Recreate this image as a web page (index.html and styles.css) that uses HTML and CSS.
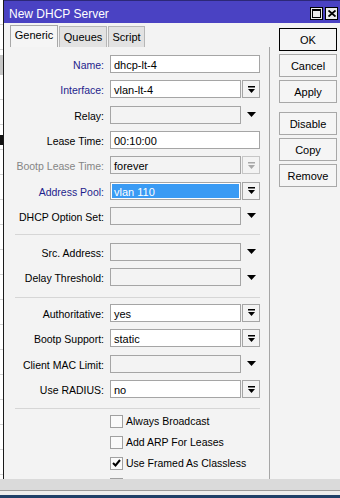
FILE: index.html
```html
<!DOCTYPE html>
<html lang="en">
<head>
    <meta charset="UTF-8">
    <meta name="viewport" content="width=device-width, initial-scale=1.0">
    <title>New DHCP Server</title>
    <link rel="stylesheet" href="styles.css">
</head>
<body>
<div class="screen">
    <div class="desk">
        <div class="behind"></div>
        <div class="window">
            <div class="titlebar">
                <span class="title-text">New DHCP Server</span>
                <span class="tbtn">
                    <svg width="9" height="9" viewBox="0 0 9 9"><rect x="0.5" y="0.5" width="8" height="8" fill="none" stroke="#000"/><rect width="9" height="2"/></svg>
                </span>
                <span class="tbtn">
                    <svg width="8" height="7" viewBox="0 0 8 7"><path d="M0.5 0.5l7 6M7.5 0.5l-7 6" stroke="#000" stroke-width="1.8"/></svg>
                </span>
            </div>
            <div class="winbody">
                <div class="main">
                    <div class="tabs">
                        <div class="tab active">Generic</div>
                        <div class="tab w-queues">Queues</div>
                        <div class="tab w-script">Script</div>
                    </div>
                    <div class="panel">
                        <div class="group">
                            <div class="row">
                                <span class="label blue">Name:</span>
                                <span class="field">dhcp-lt-4</span>
                            </div>
                            <div class="row">
                                <span class="label blue">Interface:</span>
                                <span class="field short">vlan-lt-4</span>
                                <span class="drop"><svg width="7" height="7" viewBox="0 0 7 7"><rect width="7" height="1.5"/><path d="M0 3h7L3.5 7z"/></svg></span>
                            </div>
                            <div class="row">
                                <span class="label">Relay:</span>
                                <span class="field short empty"></span>
                                <span class="arrow"><svg width="9" height="5" viewBox="0 0 9 5"><path d="M0 0h9L4.5 5z"/></svg></span>
                            </div>
                            <div class="row">
                                <span class="label">Lease Time:</span>
                                <span class="field">00:10:00</span>
                            </div>
                            <div class="row">
                                <span class="label grey">Bootp Lease Time:</span>
                                <span class="field short empty">forever</span>
                                <span class="drop off"><svg width="7" height="7" viewBox="0 0 7 7"><rect width="7" height="1.5"/><path d="M0 3h7L3.5 7z"/></svg></span>
                            </div>
                            <div class="row">
                                <span class="label blue">Address Pool:</span>
                                <span class="field short selected">vlan 110</span>
                                <span class="drop"><svg width="7" height="7" viewBox="0 0 7 7"><rect width="7" height="1.5"/><path d="M0 3h7L3.5 7z"/></svg></span>
                            </div>
                            <div class="row">
                                <span class="label">DHCP Option Set:</span>
                                <span class="field short empty"></span>
                                <span class="arrow"><svg width="9" height="5" viewBox="0 0 9 5"><path d="M0 0h9L4.5 5z"/></svg></span>
                            </div>
                        </div>
                        <div class="sep sep-1"></div>
                        <div class="group">
                            <div class="row">
                                <span class="label">Src. Address:</span>
                                <span class="field short empty"></span>
                                <span class="arrow"><svg width="9" height="5" viewBox="0 0 9 5"><path d="M0 0h9L4.5 5z"/></svg></span>
                            </div>
                            <div class="row">
                                <span class="label">Delay Threshold:</span>
                                <span class="field short empty"></span>
                                <span class="arrow"><svg width="9" height="5" viewBox="0 0 9 5"><path d="M0 0h9L4.5 5z"/></svg></span>
                            </div>
                        </div>
                        <div class="sep sep-2"></div>
                        <div class="group wide">
                            <div class="row">
                                <span class="label">Authoritative:</span>
                                <span class="field short">yes</span>
                                <span class="drop"><svg width="7" height="7" viewBox="0 0 7 7"><rect width="7" height="1.5"/><path d="M0 3h7L3.5 7z"/></svg></span>
                            </div>
                            <div class="row">
                                <span class="label">Bootp Support:</span>
                                <span class="field short">static</span>
                                <span class="drop"><svg width="7" height="7" viewBox="0 0 7 7"><rect width="7" height="1.5"/><path d="M0 3h7L3.5 7z"/></svg></span>
                            </div>
                            <div class="row">
                                <span class="label">Client MAC Limit:</span>
                                <span class="field short empty"></span>
                                <span class="arrow"><svg width="9" height="5" viewBox="0 0 9 5"><path d="M0 0h9L4.5 5z"/></svg></span>
                            </div>
                            <div class="row">
                                <span class="label">Use RADIUS:</span>
                                <span class="field short">no</span>
                                <span class="drop"><svg width="7" height="7" viewBox="0 0 7 7"><rect width="7" height="1.5"/><path d="M0 3h7L3.5 7z"/></svg></span>
                            </div>
                        </div>
                        <div class="sep sep-3"></div>
                        <div class="checks">
                            <div class="check"><span class="box"></span>Always Broadcast</div>
                            <div class="check"><span class="box"></span>Add ARP For Leases</div>
                            <div class="check"><span class="box"><svg width="9" height="8" viewBox="0 0 9 8"><path d="M1 4l2.5 2.5L8 1" fill="none" stroke="#000" stroke-width="2"/></svg></span>Use Framed As Classless</div>
                            <div class="check"><span class="box"><svg width="9" height="8" viewBox="0 0 9 8"><path d="M1 4l2.5 2.5L8 1" fill="none" stroke="#000" stroke-width="2"/></svg></span>Conflict Detection</div>
                        </div>
                    </div>
                </div>
                <div class="buttons">
                    <div class="btn default">OK</div>
                    <div class="btn">Cancel</div>
                    <div class="btn">Apply</div>
                    <div class="btn spaced">Disable</div>
                    <div class="btn">Copy</div>
                    <div class="btn">Remove</div>
                </div>
            </div>
        </div>
    </div>
    <div class="taskbar"></div>
</div>
</body>
</html>
```

FILE: styles.css
```css
body {
    margin: 0;
    font-family: "Liberation Sans", Arial, sans-serif;
    font-size: 10.5px;
    color: #000;
}
.screen {
    width: 340px;
    height: 498px;
    overflow: hidden;
    display: flex;
    flex-direction: column;
}
.desk {
    display: flex;
    height: 479px;
    overflow: hidden;
}
/* bit of the window behind this one */
.behind {
    width: 3px;
    flex: none;
    background:
        linear-gradient(#c6c6c6, #c6c6c6) 0 55px / 3px 20px no-repeat,
        linear-gradient(#111, #111) 0 135px / 3px 10px no-repeat,
        repeating-linear-gradient(#fff 0 24px, #d4d4d4 24px 25px);
}
.window {
    flex: 1;
    border-left: 1px solid #1a1a1a;
    background: #f3f3f3;
    display: flex;
    flex-direction: column;
}
.titlebar {
    height: 23px;
    flex: none;
    border-top: 1px solid #2c2878;
    background: #4a42c3;
    color: #fff;
    font-size: 12px;
    display: flex;
    align-items: flex-end;
    padding: 0 2px 3px 5px;
    box-sizing: border-box;
}
.title-text {
    flex: 1;
    line-height: 13px;
    margin-bottom: -1px;
}
.tbtn {
    width: 11px;
    height: 11px;
    border: 1px solid #000;
    background: #ececec;
    margin-left: 2px;
    display: flex;
    align-items: center;
    justify-content: center;
}
.winbody {
    display: flex;
    flex: 1;
    min-height: 0;
}
.main {
    margin-left: 6px;
    width: 260px;
    display: flex;
    flex-direction: column;
}
.tabs {
    display: flex;
    gap: 1px;
    margin-top: 3px;
    height: 21px;
    align-items: flex-end;
}
.tab {
    width: 47px;
    height: 19px;
    line-height: 19px;
    padding-top: 1px;
    text-align: center;
    font-size: 11px;
    border: 1px solid #b6b6b6;
    border-bottom: none;
    background: #e2e2e2;
}
.tab.active {
    width: 46px;
    height: 21px;
    padding-top: 0;
    background: #f5f5f5;
    border-color: #a8a8a8;
}
.tab.w-queues { width: 46px; }
.tab.w-script { width: 35px; }
.panel {
    flex: 1;
    border-right: 1px solid #a6a6a6;
    padding-top: 8px;
}
.group {
    display: flex;
    flex-direction: column;
    gap: 7.33px;
}
.group.wide { gap: 7.5px; }
.row {
    display: flex;
    align-items: center;
    height: 18px;
}
.label {
    width: 94px;
    margin-right: 6px;
    text-align: right;
    white-space: nowrap;
    line-height: 16px;
    padding-top: 2px;
}
.label.blue { color: #1e1e8c; }
.label.grey { color: #858585; }
.field {
    width: 150px;
    height: 18px;
    box-sizing: border-box;
    border: 1px solid #a5a5a5;
    background: #fff;
    padding: 1px 0 0 3px;
    line-height: 16px;
    font-size: 11px;
    white-space: nowrap;
}
.field.short { width: 131px; }
.field.empty { background: #f3f3f3; }
.field.selected {
    background: #3a9bf4;
    color: #fff;
    box-shadow: inset 0 0 0 1px #fff;
}
.drop, .arrow {
    width: 18px;
    height: 18px;
    margin-left: 1px;
    box-sizing: border-box;
    display: flex;
    align-items: center;
    justify-content: center;
}
.drop { border: 1px solid #a5a5a5; }
.drop.off { border-color: #c6c6c6; }
.drop.off svg { fill: #a8a8a8; }
.sep {
    height: 1px;
    background: #d6d6d6;
    margin-left: 5px;
    margin-right: 9px;
}
.sep-1 { margin-top: 9px; margin-bottom: 8px; }
.sep-2 { margin-top: 10.67px; margin-bottom: 6px; }
.sep-3 { margin-top: 9.5px; margin-bottom: 6px; }
.checks {
    display: flex;
    flex-direction: column;
    gap: 8px;
    padding-left: 100px;
}
.check {
    display: flex;
    align-items: center;
    height: 13px;
    line-height: 13px;
    white-space: nowrap;
}
.box {
    width: 13px;
    height: 13px;
    box-sizing: border-box;
    border: 1px solid #a0a0a0;
    background: #fafafa;
    margin-right: 3px;
    display: flex;
    align-items: center;
    justify-content: center;
}
.buttons {
    width: 58px;
    margin-left: 9px;
    margin-top: 5px;
    display: flex;
    flex-direction: column;
    gap: 3px;
}
.btn {
    height: 23px;
    box-sizing: border-box;
    border: 1px solid #a8a8a8;
    background: #f5f5f5;
    font-size: 11px;
    display: flex;
    align-items: center;
    justify-content: center;
}
.btn.default { border-color: #000; }
.btn.spaced { margin-top: 6px; }
.taskbar {
    height: 19px;
    flex: none;
    background: linear-gradient(#dadada 0 11px, #9a9a9a 11px 12px, #ededed 12px 16px, #1f4068 16px);
}
```
